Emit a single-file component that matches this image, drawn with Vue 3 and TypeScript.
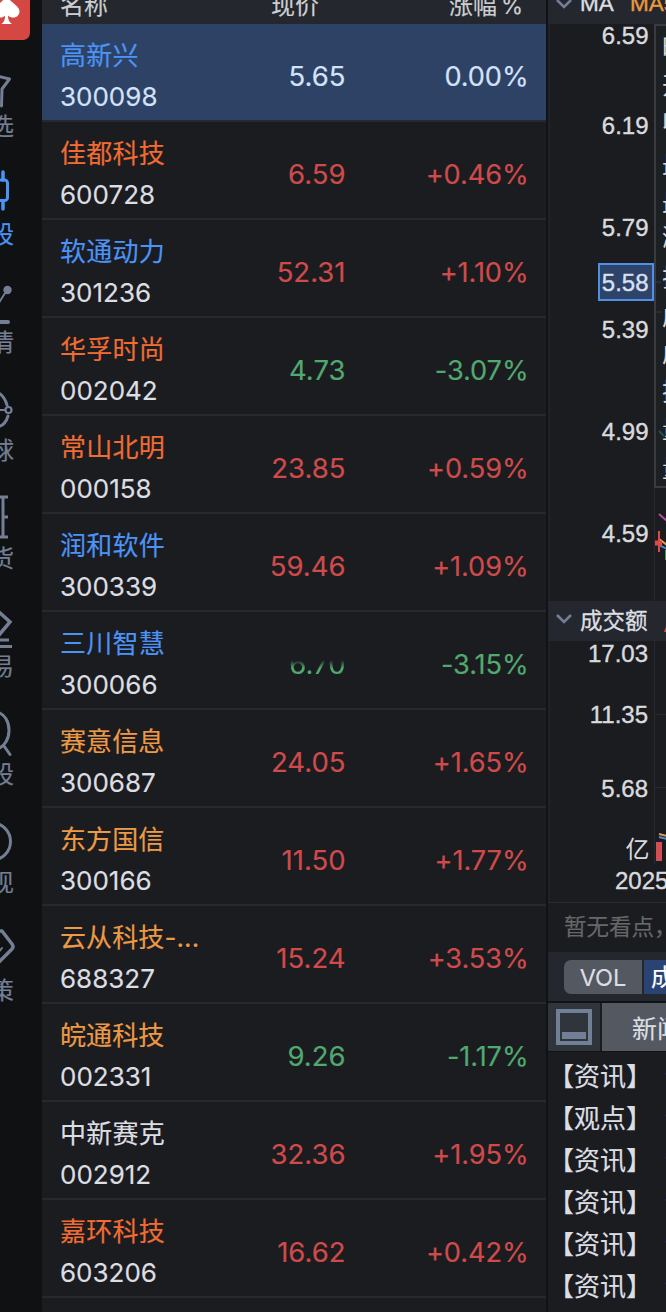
<script setup lang="ts">
interface Stock {
  name: string
  code: string
  price: string
  change: string
  tone: 'blue' | 'orange' | 'amber' | 'plain'
  trend: 'up' | 'down' | 'flat'
  faded?: boolean
}

const stocks: Stock[] = [
  { name: '高新兴', code: '300098', price: '5.65', change: '0.00%', tone: 'blue', trend: 'flat' },
  { name: '佳都科技', code: '600728', price: '6.59', change: '+0.46%', tone: 'orange', trend: 'up' },
  { name: '软通动力', code: '301236', price: '52.31', change: '+1.10%', tone: 'blue', trend: 'up' },
  { name: '华孚时尚', code: '002042', price: '4.73', change: '-3.07%', tone: 'orange', trend: 'down' },
  { name: '常山北明', code: '000158', price: '23.85', change: '+0.59%', tone: 'orange', trend: 'up' },
  { name: '润和软件', code: '300339', price: '59.46', change: '+1.09%', tone: 'blue', trend: 'up' },
  { name: '三川智慧', code: '300066', price: '6.70', change: '-3.15%', tone: 'blue', trend: 'down', faded: true },
  { name: '赛意信息', code: '300687', price: '24.05', change: '+1.65%', tone: 'amber', trend: 'up' },
  { name: '东方国信', code: '300166', price: '11.50', change: '+1.77%', tone: 'amber', trend: 'up' },
  { name: '云从科技-...', code: '688327', price: '15.24', change: '+3.53%', tone: 'amber', trend: 'up' },
  { name: '皖通科技', code: '002331', price: '9.26', change: '-1.17%', tone: 'amber', trend: 'down' },
  { name: '中新赛克', code: '002912', price: '32.36', change: '+1.95%', tone: 'plain', trend: 'up' },
  { name: '嘉环科技', code: '603206', price: '16.62', change: '+0.42%', tone: 'orange', trend: 'up' },
]

const navItems = [
  { id: 'star', label: '选' },
  { id: 'candle', label: '股' },
  { id: 'trend', label: '情' },
  { id: 'globe', label: '球' },
  { id: 'futures', label: '货' },
  { id: 'trade', label: '易' },
  { id: 'search', label: '股' },
  { id: 'watch', label: '现' },
  { id: 'policy', label: '策' },
]

const priceTicks = [
  { y: 36, label: '6.59' },
  { y: 126, label: '6.19' },
  { y: 228, label: '5.79' },
  { y: 330, label: '5.39' },
  { y: 432, label: '4.99' },
  { y: 534, label: '4.59' },
]
const volumeTicks = [
  { y: 654, label: '17.03' },
  { y: 715, label: '11.35' },
  { y: 789, label: '5.68' },
]
const infoRows = [
  { y: 47, label: '时' }, { y: 85, label: '开' }, { y: 122, label: '收' },
  { y: 165, label: '最' }, { y: 203, label: '最' }, { y: 237, label: '涨' },
  { y: 277, label: '振' }, { y: 316, label: '成' }, { y: 353, label: '成' },
  { y: 391, label: '换' }, { y: 429, label: '量' }, { y: 468, label: '量' },
]
const news = ['资讯', '观点', '资讯', '资讯', '资讯', '资讯']
</script>

<template>
  <main class="app">
    <aside class="nav">
      <div class="logo">
        <svg width="30" height="40" viewBox="0 0 30 40">
          <path d="M6.500-6C5 2-6 5-6 11.500c0 6 8 8 11 4 0 4-.5 6-3.500 8.500h10.500c-3-2-4-4.500-4-8.500 4 4 11.500 2 11.500-4C19.500 5 8 2 6.500-6Z" fill="#fff" />
        </svg>
      </div>
      <div v-for="(item, i) in navItems" :key="i" class="nav-item" :class="{ active: i === 1 }">
        <svg class="nav-icon" width="20" height="44" viewBox="0 0 20 44" fill="none" stroke="currentColor" stroke-width="3" stroke-linejoin="round" stroke-linecap="round">
          <path v-if="item.id === 'star'" d="M-3 9 9.500 12 2 22 1.500 39" />
          <template v-else-if="item.id === 'candle'">
            <path d="M3 5V13M3 34V42" transform="translate(0 -8)" stroke-width="3.500" />
            <rect x="-3" y="5" width="10.500" height="20.500" rx="3" />
          </template>
          <template v-else-if="item.id === 'trend'">
            <path d="M-3 23 0 18 7 7" stroke-width="2" />
            <circle cx="7.500" cy="7" r="4.200" fill="currentColor" stroke="none" />
            <path d="M-2 39H8" stroke-width="4" />
          </template>
          <template v-else-if="item.id === 'globe'">
            <path d="M-3 1Q4 4 7 14M-3 36Q5 35 8 25" />
            <path d="M-2 19H5" stroke-width="2" />
            <circle cx="8.500" cy="19" r="3" stroke-width="2.200" />
          </template>
          <template v-else-if="item.id === 'futures'">
            <path d="M-2 -2H8M3 -2V38M3 18H8M-2 38H8" stroke-width="3" stroke-linecap="butt" />
          </template>
          <template v-else-if="item.id === 'trade'">
            <path d="M-1 5 10 15-1 28" stroke-width="3.500" stroke-linejoin="miter" />
            <path d="M-2 33H9M-2 39.500H12" stroke-width="3" stroke-linecap="butt" />
          </template>
          <template v-else-if="item.id === 'search'">
            <path d="M-3 -3C13 1 13 29 -3 34M4 31 10 39.500" />
          </template>
          <circle v-else-if="item.id === 'watch'" cx="-8" cy="18.500" r="18.500" />
          <template v-else>
            <path d="M-2 0H2L12 13Q14 16 12 18L-2 32" stroke-width="3.500" />
            <path d="M-2 22 2 17" stroke-width="2" />
          </template>
        </svg>
        <span class="nav-label">{{ item.label }}</span>
      </div>
    </aside>

    <section class="quotes">
      <header class="quotes-head">
        <span class="col-name">名称</span>
        <span class="col-price">现价</span>
        <span class="col-change">涨幅<i>%</i></span>
      </header>
      <div v-for="(s, i) in stocks" :key="s.code" class="row" :class="[s.trend, { selected: i === 0 }]">
        <div class="identity">
          <span class="name" :class="s.tone">{{ s.name }}</span>
          <span class="code">{{ s.code }}</span>
        </div>
        <span class="price" :class="{ faded: s.faded }">{{ s.price }}</span>
        <span class="change">{{ s.change }}</span>
      </div>
    </section>

    <section class="detail">
      <header class="ma-head">
        <svg class="chevron" width="18" height="11" viewBox="0 0 18 11"><path d="M2 2 9 9 16 2" /></svg>
        <span class="ma">MA</span><span class="ma5">MA5</span>
      </header>
      <svg class="chart" width="118" height="577" viewBox="548 24 118 577">
        <path d="M654.500 24V601M549 24V601" stroke="#26292e" />
        <text v-for="t in priceTicks" :key="t.y" class="tick" x="648.500" :y="t.y + 8">{{ t.label }}</text>
        <rect x="599" y="264" width="54" height="36" fill="#2e4369" stroke="#4f8fe6" stroke-width="2" />
        <text class="tick current" x="648.500" y="291">5.58</text>
        <rect x="655" y="25" width="60" height="462" fill="#1d2023" stroke="#393b3f" stroke-width="2" />
        <text v-for="r in infoRows" :key="r.y" class="info" x="662" :y="r.y + 9">{{ r.label }}</text>
        <path d="M656 282H661" stroke="#284353" fill="none" />
        <path d="M656 312H662" stroke="#4d3030" fill="none" />
        <path d="M659 431 664 436" stroke="#24504f" stroke-width="2" />
        <path d="M659 514 667 521" stroke="#b34b99" stroke-width="2" />
        <path d="M659 539 667 545" stroke="#dda34c" stroke-width="2" />
        <path d="M659 545 667 549" stroke="#4b83d5" stroke-width="2" />
        <path d="M659 531V552" stroke="#dc4a43" stroke-width="2" />
        <path d="M655 543H662" stroke="#dc4a43" stroke-width="5" />
        <path d="M665.500 550V560" stroke="#45986a" />
      </svg>
      <header class="volume-head">
        <svg class="chevron" width="18" height="11" viewBox="0 0 18 11"><path d="M2 2 9 9 16 2" /></svg>
        <span>成交额</span>
        <svg class="marker" width="3" height="8" viewBox="0 0 3 8"><path d="M0 8 3 0V8Z" fill="#dc4a43" /></svg>
      </header>
      <svg class="chart" width="118" height="261" viewBox="548 641 118 261">
        <path d="M654.500 641V864M549 641V901M655 714.500H666M655 787.500H666" stroke="#26292e" />
        <text v-for="t in volumeTicks" :key="t.y" class="tick" x="648" :y="t.y + 8">{{ t.label }}</text>
        <text class="unit" x="649.500" y="858">亿</text>
        <text class="year" x="615" y="889">2025</text>
        <path d="M659 834 667 836" stroke="#d3a15b" stroke-width="2" />
        <path d="M659 837 667 839" stroke="#5687d2" stroke-width="2" />
        <rect x="656" y="842" width="6" height="19" fill="#d34e52" />
      </svg>
      <div class="notice">暂无看点，</div>
      <div class="tabs"><span class="tab">VOL</span><span class="tab tab-active">成交额</span></div>
      <div class="toolbar">
        <div class="dock">
          <svg width="36" height="36" viewBox="0 0 36 36">
            <rect x="2" y="2" width="32" height="32" fill="none" stroke="#718097" stroke-width="4" />
            <rect x="6" y="23" width="24" height="7" fill="#718097" />
          </svg>
        </div>
        <div class="news-tab">新闻</div>
      </div>
      <ul class="news">
        <li v-for="(n, i) in news" :key="i"><span>【{{ n }}】</span><b>“</b></li>
      </ul>
    </section>
  </main>
</template>

<style>
html,
body {
  background: #1b1c20;
  overflow: hidden;
}
</style>

<style scoped>
* {
  box-sizing: border-box;
}
.app {
  display: flex;
  width: 666px;
  height: 1312px;
  overflow: hidden;
  background: #1b1c20;
  color: #dcdee2;
  font-family: Inter, 'Noto Sans CJK SC', sans-serif;
  white-space: nowrap;
  -webkit-text-stroke: 0.15px currentColor;
}
.nav {
  flex: none;
  width: 42px;
  background: #0f1113;
  overflow: hidden;
}
.logo {
  width: 30px;
  height: 40px;
  background: #d54743;
  border-radius: 0 0 7px 0;
  overflow: hidden;
}
.logo svg,
.nav-icon,
.chart,
.dock svg,
.chevron {
  display: block;
}
.nav-icon {
  overflow: visible;
}
.nav-item {
  height: 108px;
  padding-top: 27px;
  color: #747e94;
}
.nav-item.active {
  color: #4b94f5;
}
.nav-label {
  display: flex;
  justify-content: flex-end;
  width: 14px;
  height: 32px;
  line-height: 32px;
  font-size: 24px;
}
.quotes {
  flex: none;
  width: 506px;
  border-right: 2px solid #101216;
  overflow: hidden;
}
.quotes-head {
  display: flex;
  height: 24px;
  padding: 0 23px 0 18px;
  background: #24272d;
  font-size: 24px;
  line-height: 12px;
  color: #ccced2;
  overflow: hidden;
}
.quotes-head .col-name {
  width: 211px;
}
.quotes-head .col-price {
  flex: 1;
}
.quotes-head i {
  margin-left: 4px;
  font-size: 22.5px;
  font-style: normal;
}
.row {
  display: flex;
  align-items: center;
  height: 98px;
  padding: 7px 19px 0 18px;
  border-bottom: 2px solid #27292e;
}
.row.selected {
  background: #2e4265;
  color: #d3e2fa;
}
.identity {
  display: flex;
  flex-direction: column;
  width: 165px;
  height: 89px;
}
.name {
  height: 50px;
  line-height: 50px;
  font-size: 26px;
  letter-spacing: 0.25px;
}
.code {
  height: 32px;
  line-height: 32px;
  font-size: 26px;
}
.blue { color: #4b94f5; }
.orange { color: #f06c32; }
.amber { color: #ec9a45; letter-spacing: 0.1px; }
.price,
.change {
  height: 89px;
  line-height: 91px;
  font-size: 27.5px;
  text-align: right;
}
.price {
  width: 120.5px;
}
.change {
  flex: 1;
  margin-right: -1.5px;
  font-size: 27.2px;
  letter-spacing: -0.1px;
}
.up { color: #dcdee2; }
.up .price,
.up .change {
  color: #cf4b4b;
}
.down .price,
.down .change {
  color: #51a96f;
}
.price.faded {
  -webkit-mask-image: linear-gradient(transparent 41px, #000 49px);
  mask-image: linear-gradient(transparent 41px, #000 49px);
}
.detail {
  flex: none;
  width: 118px;
  overflow: hidden;
}
.ma-head,
.volume-head {
  display: flex;
  align-items: center;
  background: #24272d;
  padding-left: 7px;
}
.ma-head {
  height: 24px;
  padding-bottom: 17px;
  font: 22.5px/24px 'Liberation Sans', sans-serif;
  -webkit-text-stroke: 0.4px currentColor;
}
.ma {
  flex: none;
  width: 50px;
  margin-left: 7px;
}
.ma5 {
  flex: none;
  color: #e99a3e;
}
.chevron {
  flex: none;
  fill: none;
  stroke: #747e99;
  stroke-width: 2.6;
}
.volume-head {
  height: 40px;
  padding-bottom: 5px;
  font-size: 22.5px;
  -webkit-text-stroke-width: 0.3px;
}
.volume-head span {
  margin-left: 7px;
}
.volume-head .marker {
  flex: none;
  margin: 18px 0 0 16px;
}
.tick,
.year {
  font: 24px 'Liberation Sans', sans-serif;
  fill: #d8dade;
  stroke: #d8dade;
  stroke-width: 0.4px;
}
.tick,
.unit {
  text-anchor: end;
}
.current {
  fill: #d3e2fa;
}
.info,
.unit {
  font-size: 24px;
  fill: #d8dade;
}
.notice {
  height: 50px;
  padding-left: 16px;
  border-top: 1px solid #292c31;
  font-size: 22.5px;
  line-height: 48px;
  color: #65676b;
}
.tabs {
  display: flex;
  gap: 2px;
  height: 49px;
  padding: 8px 0 7px 16px;
  background: #24272d;
}
.tab {
  flex: none;
  width: 78px;
  height: 34px;
  border-radius: 7px;
  background: #535861;
  font-size: 23.5px;
  line-height: 36px;
  text-align: center;
}
.tab:first-child {
  border-radius: 7px 0 0 7px;
}
.tab-active {
  border-radius: 0;
  padding-left: 7px;
  background: #2b4373;
  text-align: left;
  color: #fff;
}
.toolbar {
  display: flex;
  gap: 2px;
  height: 51px;
  border-top: 2px solid #101216;
  border-bottom: 1px solid #101216;
}
.dock {
  flex: none;
  width: 52px;
  padding: 6px 8px;
  background: #30343b;
}
.news-tab {
  flex: none;
  width: 80px;
  padding-left: 30px;
  background: #535861;
  font-size: 25px;
  line-height: 52px;
}
.news {
  margin: 0;
  padding: 4px 0 0;
  list-style: none;
  font-size: 26px;
}
.news li {
  display: flex;
  height: 42px;
  line-height: 42px;
}
.news span {
  flex: none;
  width: 116px;
}
.news b {
  font-weight: 400;
}
</style>
